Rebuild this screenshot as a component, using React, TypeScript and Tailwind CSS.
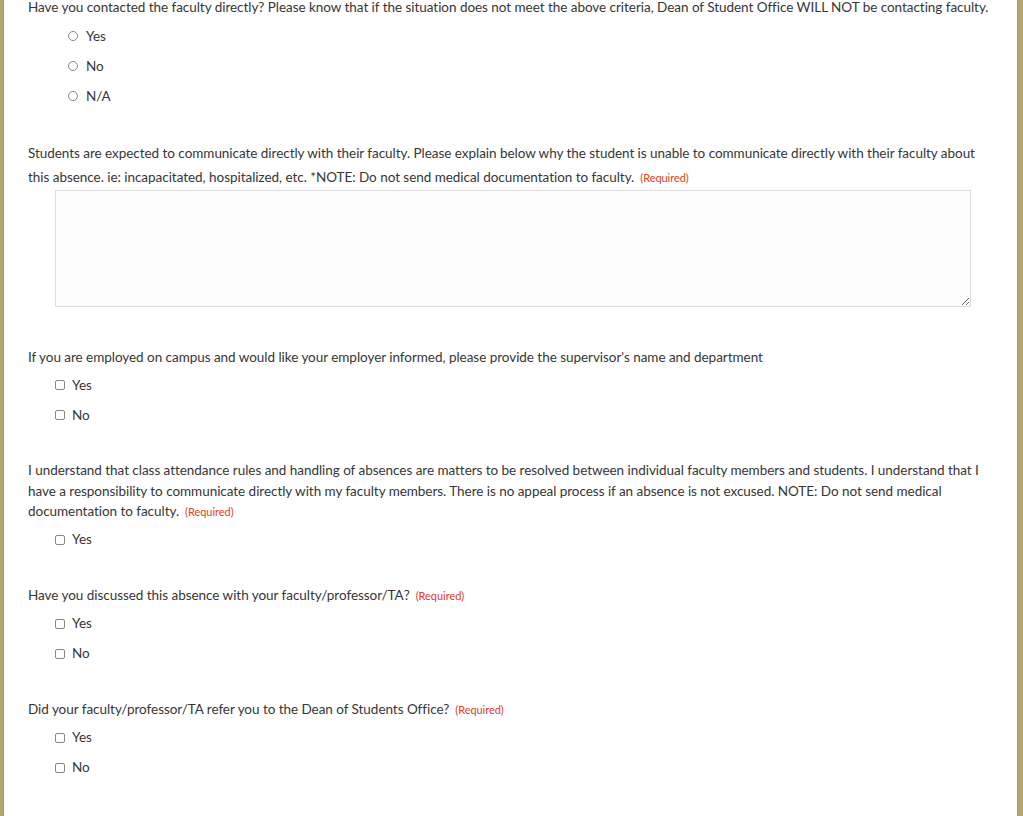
import React from 'react';

const font = { fontFamily: '"Lato", "Open Sans", sans-serif' };

function Required() {
  return <span className="ml-[6px] text-[11px] leading-none text-[#e2401c]">(Required)</span>;
}

function Radio({ label }: { label: string }) {
  return (
    <label className="flex h-[30px] items-center pl-[40px]">
      <span className="h-[10px] w-[10px] rounded-full border border-[#888] bg-white" />
      <span className="ml-[8px]">{label}</span>
    </label>
  );
}

function Check({ label }: { label: string }) {
  return (
    <label className="flex h-[30px] items-center pl-[27px]">
      <span className="h-[10px] w-[10px] rounded-[2px] border border-[#888] bg-white" />
      <span className="ml-[7px]">{label}</span>
    </label>
  );
}

export default function App() {
  return (
    <div className="flex h-[816px] overflow-hidden bg-[#b5a66b]" style={font}>
      <div className="ml-[3px] mr-[5px] flex-1 border-x border-[#9a9a9a] bg-white pl-[24px] pr-[21px] text-[13.5px] tracking-[-0.04px] text-[#363636]">
        <div className="-mt-[5px]">
          <p className="leading-6">
            Have you contacted the faculty directly? Please know that if the situation does not meet the above criteria, Dean of Student Office WILL NOT be contacting faculty.
          </p>
          <div className="mt-[2px]">
            <Radio label="Yes" />
            <Radio label="No" />
            <Radio label="N/A" />
          </div>
        </div>

        <div className="mt-[30px]">
          <p className="leading-6">
            Students are expected to communicate directly with their faculty. Please explain below why the student is unable to communicate directly with their faculty about this absence. ie: incapacitated, hospitalized, etc. *NOTE: Do not send medical documentation to faculty.
            <Required />
          </p>
          <textarea className="ml-[27px] mt-[1px] block h-[117px] w-[916px] border border-[#dcdcdc] bg-[#fdfdfd] outline-none" />
        </div>

        <div className="mt-[38px]">
          <p className="leading-6">
            If you are employed on campus and would like your employer informed, please provide the supervisor's name and department
          </p>
          <div className="mt-[1px]">
            <Check label="Yes" />
            <Check label="No" />
          </div>
        </div>

        <div className="mt-[30px]">
          <p className="leading-[20.5px]">
            I understand that class attendance rules and handling of absences are matters to be resolved between individual faculty members and students. I understand that I have a responsibility to communicate directly with my faculty members. There is no appeal process if an absence is not excused. NOTE: Do not send medical documentation to faculty.
            <Required />
          </p>
          <div className="mt-[3px]">
            <Check label="Yes" />
          </div>
        </div>

        <div className="mt-[28px]">
          <p className="leading-6">
            Have you discussed this absence with your faculty/professor/TA?
            <Required />
          </p>
          <div className="mt-[2px]">
            <Check label="Yes" />
            <Check label="No" />
          </div>
        </div>

        <div className="mt-[28px]">
          <p className="leading-6">
            Did your faculty/professor/TA refer you to the Dean of Students Office?
            <Required />
          </p>
          <div className="mt-[2px]">
            <Check label="Yes" />
            <Check label="No" />
          </div>
        </div>
      </div>
    </div>
  );
}
